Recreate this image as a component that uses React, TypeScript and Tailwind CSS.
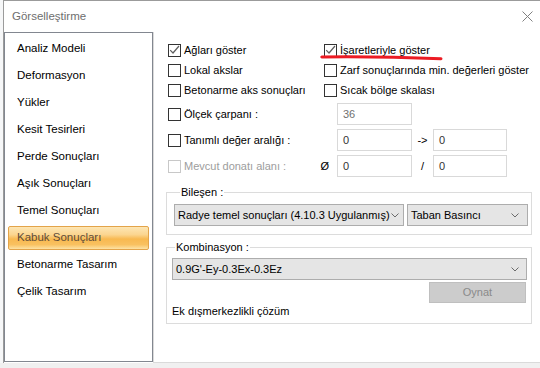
import React from "react";

const font = { fontFamily: '"Liberation Sans", Arial, sans-serif' };

const menu = [
  "Analiz Modeli",
  "Deformasyon",
  "Yükler",
  "Kesit Tesirleri",
  "Perde Sonuçları",
  "Aşık Sonuçları",
  "Temel Sonuçları",
  "Kabuk Sonuçları",
  "Betonarme Tasarım",
  "Çelik Tasarım",
];

function Box({ checked = false, disabled = false }: { checked?: boolean; disabled?: boolean }) {
  return (
    <span
      className={`w-[13px] h-[13px] shrink-0 bg-white border flex items-center justify-center ${
        disabled ? "border-[#c8c8c8]" : "border-[#333333]"
      }`}
    >
      {checked && (
        <svg width="11" height="11" viewBox="0 0 11 11">
          <path d="M1.2 5.2 L4 8 L10 1" fill="none" stroke="#5f5f5f" strokeWidth="1.2" />
        </svg>
      )}
    </span>
  );
}

function Check({ label, checked, disabled }: { label: string; checked?: boolean; disabled?: boolean }) {
  return (
    <div className="flex items-center gap-[3px] h-[20px] whitespace-nowrap">
      <Box checked={checked} disabled={disabled} />
      <span className={disabled ? "text-[#9d9d9d]" : "text-black"}>{label}</span>
    </div>
  );
}

function Chevron() {
  return (
    <svg width="8" height="5" viewBox="0 0 8 5" className="shrink-0">
      <path d="M0.5 0.5 L4 4 L7.5 0.5" fill="none" stroke="#6b6b6b" strokeWidth="1" />
    </svg>
  );
}

function Field({ value, dim }: { value: string; dim?: boolean }) {
  return (
    <div
      className={`h-[22px] border border-[#d9d9d9] bg-white flex items-center pl-[5px] ${
        dim ? "text-[#707070]" : "text-[#333333]"
      }`}
    >
      {value}
    </div>
  );
}

export default function App() {
  return (
    <div className="w-[540px] h-[368px] bg-[#f0f0f0] flex flex-col overflow-hidden" style={font}>
      <div className="flex h-[363px]">
        <div className="w-[3px] shrink-0 bg-[#f6f7f8]" />
        <div className="flex-1 min-w-0 flex flex-col bg-white border-l border-t border-[#9b9b9b]">
          <div className="h-[31px] shrink-0 flex items-center justify-between pl-[8px] pr-[7px]">
            <span className="text-[11.5px] text-[#6e6e6e]">Görselleştirme</span>
            <svg width="11" height="11" viewBox="0 0 11 11">
              <path d="M0.5 0.5 L10.5 10.5 M10.5 0.5 L0.5 10.5" stroke="#808080" strokeWidth="1" />
            </svg>
          </div>

          <div className="flex flex-1 min-h-0">
            <div className="w-[149px] shrink-0 h-[330px] border border-[#828790] bg-white pt-[4px] text-[11.5px]">
              {menu.map((m) => (
                <div key={m} className="h-[27px] px-[3px]">
                  {m === "Kabuk Sonuçları" ? (
                    <div className="h-[24px] rounded-[2px] border border-[#e3a44a] bg-[linear-gradient(#fde6b4_0%,#fbd58f_35%,#f8b950_55%,#f9c160_80%,#fde2a4_100%)] flex items-center pl-[8px] text-[#5e4c3a]">
                      {m}
                    </div>
                  ) : (
                    <div className="h-[24px] flex items-center pl-[9px] text-black">{m}</div>
                  )}
                </div>
              ))}
            </div>

            <div className="flex-1 min-w-0 border-l border-b border-[#dadada] pl-[14px] pr-[8px] pt-[8px] text-[11px]">
              <div className="grid grid-cols-[156px_1fr]">
                <Check label="Ağları göster" checked />
                <div className="relative">
                  <Check label="İşaretleriyle göster" checked />
                  <svg className="absolute left-[-4px] top-[15px]" width="123" height="6" viewBox="0 0 123 6">
                    <path d="M1.8 2 Q60 1.3 121 3.8" fill="none" stroke="#ec1c24" strokeWidth="3" strokeLinecap="round" />
                  </svg>
                </div>
                <Check label="Lokal akslar" />
                <Check label="Zarf sonuçlarında min. değerleri göster" />
                <Check label="Betonarme aks sonuçları" />
                <Check label="Sıcak bölge skalası" />
              </div>

              <div className="mt-[1px]">
                <div className="flex items-center h-[26px]">
                  <div className="w-[169px] shrink-0">
                    <Check label="Ölçek çarpanı :" />
                  </div>
                  <div className="w-[75px] shrink-0">
                    <Field value="36" dim />
                  </div>
                </div>
                <div className="flex items-center h-[26px]">
                  <div className="w-[169px] shrink-0">
                    <Check label="Tanımlı değer aralığı :" />
                  </div>
                  <div className="w-[75px] shrink-0">
                    <Field value="0" />
                  </div>
                  <span className="w-[21px] shrink-0 text-center">-&gt;</span>
                  <div className="w-[74px] shrink-0">
                    <Field value="0" />
                  </div>
                </div>
                <div className="flex items-center h-[26px]">
                  <div className="w-[169px] shrink-0 flex items-center justify-between pr-[8px]">
                    <Check label="Mevcut donatı alanı :" disabled />
                    <span className="text-black">Ø</span>
                  </div>
                  <div className="w-[75px] shrink-0">
                    <Field value="0" />
                  </div>
                  <span className="w-[21px] shrink-0 text-center">/</span>
                  <div className="w-[74px] shrink-0">
                    <Field value="0" />
                  </div>
                </div>
              </div>

              <fieldset className="ml-[-2px] mt-[6px] border border-[#dcdcdc] px-[7px] pb-[8px] min-w-0">
                <legend className="ml-[6px] px-[1px] leading-[14px]">Bileşen :</legend>
                <div className="flex gap-[3px] pt-[5px]">
                  <div className="w-[230px] shrink-0 h-[22px] border border-[#adadad] bg-[#e5e5e5] flex items-center justify-between pl-[3px] pr-[4px] whitespace-nowrap">
                    <span>Radye temel sonuçları (4.10.3 Uygulanmış)</span>
                    <Chevron />
                  </div>
                  <div className="w-[121px] shrink-0 h-[22px] border border-[#adadad] bg-[#e5e5e5] flex items-center justify-between pl-[3px] pr-[8px]">
                    <span>Taban Basıncı</span>
                    <Chevron />
                  </div>
                </div>
              </fieldset>

              <fieldset className="ml-[-2px] mt-[5px] border border-[#dcdcdc] pl-[5px] pr-[4px] pb-[5px] min-w-0">
                <legend className="ml-[3px] px-[1px] leading-[14px]">Kombinasyon :</legend>
                <div className="pt-[4px]">
                  <div className="h-[22px] border border-[#adadad] bg-[#e5e5e5] flex items-center justify-between pl-[3px] pr-[7px]">
                    <span>0.9G&apos;-Ey-0.3Ex-0.3Ez</span>
                    <Chevron />
                  </div>
                  <div className="flex justify-end mt-[2px] pr-[1px]">
                    <div className="w-[97px] h-[21px] border border-[#bfbfbf] bg-[#cccccc] flex items-center justify-center text-[#8a8a8a]">
                      Oynat
                    </div>
                  </div>
                  <div className="mt-[1px] h-[14px] leading-[14px]">Ek dışmerkezlikli çözüm</div>
                </div>
              </fieldset>
            </div>
          </div>
        </div>
      </div>
    </div>
  );
}
